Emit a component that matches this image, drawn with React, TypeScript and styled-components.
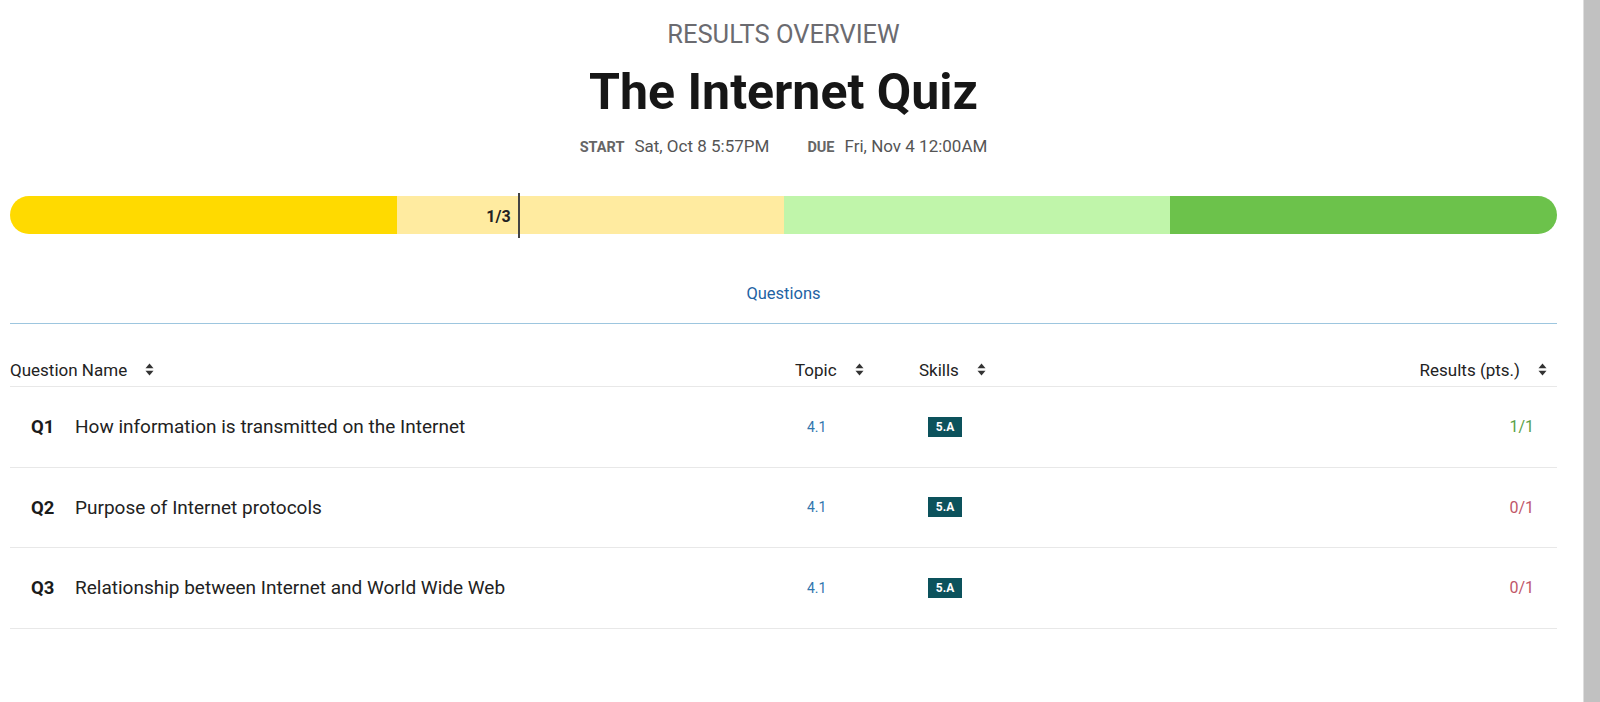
import styled, { createGlobalStyle } from "styled-components";

const GlobalStyle = createGlobalStyle`
    html, body {
        margin: 0;
        padding: 0;
        height: 100%;
        overflow: hidden;
        background: #fff;
    }
    body {
        font-family: Roboto, "Liberation Sans", Arial, sans-serif;
        color: #222;
    }
`

const Screen = styled.div`
    display: flex;
    height: 100vh;
`

const Page = styled.main`
    flex: 1;
    min-width: 0;
    padding: 20px 26px 0 10px;
`

const ScrollTrack = styled.div`
    width: 16px;
    flex-shrink: 0;
    background: #c1c1c1;
    border-left: 1px solid #dedede;
`

const Header = styled.header`
    display: flex;
    flex-direction: column;
    align-items: center;
`

const Eyebrow = styled.div`
    font-size: 25.5px;
    line-height: 28px;
    color: #6b6b70;
`

const Title = styled.h1`
    margin: 14px 0 0;
    font-size: 50px;
    line-height: 60px;
    font-weight: 700;
    color: #161616;
`

const Dates = styled.div`
    margin-top: 14px;
    display: flex;
    align-items: baseline;
    gap: 38px;
    line-height: 20px;
`

const DateItem = styled.div`
    display: flex;
    align-items: baseline;
    gap: 10px;
`

const DateLabel = styled.span`
    font-size: 14.5px;
    font-weight: 700;
    color: #666;
`

const DateValue = styled.span`
    font-size: 17px;
    color: #555;
`

const Progress = styled.div`
    position: relative;
    margin-top: 38px;
    height: 38px;
`

const Track = styled.div`
    display: flex;
    height: 100%;
    border-radius: 19px;
    overflow: hidden;
`

const Segment = styled.div<{ $color: string }>`
    flex: 1;
    background: ${(p) => p.$color};
`

const Marker = styled.div`
    position: absolute;
    top: -3px;
    bottom: -4px;
    width: 2px;
    background: #444;
`

const MarkerLabel = styled.span`
    position: absolute;
    right: 9px;
    top: 50%;
    transform: translateY(-50%);
    font-size: 16px;
    font-weight: 700;
    color: #222;
`

const Tabs = styled.nav`
    margin-top: 42px;
    display: flex;
    justify-content: center;
    border-bottom: 1px solid #9dc6df;
`

const Tab = styled.div`
    padding: 8px 0 19px;
    font-size: 16.5px;
    line-height: 20px;
    color: #1f63a4;
`

const Table = styled.div`
    margin-top: 29px;
`

const Row = styled.div<{ $head?: boolean }>`
    display: grid;
    grid-template-columns: 785px 124px 124px 1fr;
    align-items: center;
    height: ${(p) => (p.$head ? "33px" : "79.5px")};
    border-bottom: 1px solid #e8e8e8;
`

const HeadCell = styled.div<{ $end?: boolean }>`
    display: flex;
    align-items: center;
    justify-content: ${(p) => (p.$end ? "flex-end" : "flex-start")};
    gap: 18px;
    padding-right: ${(p) => (p.$end ? "10px" : "0")};
    font-size: 17px;
    color: #222;
`

const NameCell = styled.div`
    display: flex;
    align-items: baseline;
    padding-left: 21px;
`

const QLabel = styled.span`
    width: 44px;
    flex-shrink: 0;
    font-size: 18.5px;
    font-weight: 700;
    color: #1b1b1b;
`

const QText = styled.span`
    font-size: 19px;
    color: #222;
`

const TopicCell = styled.div`
    padding-left: 12px;
    font-size: 14px;
    color: #3276ad;
`

const SkillCell = styled.div`
    padding-left: 9px;
    display: flex;
`

const Badge = styled.span`
    display: inline-flex;
    align-items: center;
    justify-content: center;
    width: 34px;
    height: 20px;
    background: #0c525c;
    color: #fff;
    font-size: 12px;
    font-weight: 700;
`

const ScoreCell = styled.div<{ $full: boolean }>`
    text-align: right;
    padding-right: 23px;
    font-size: 16px;
    color: ${(p) => (p.$full ? "#5a9f47" : "#c05668")};
`

const SortIcon = () => (
    <svg width="9" height="13" viewBox="0 0 9 13" fill="#333">
        <path d="M4.5 0.5 L8.5 5.2 H0.5 Z" />
        <path d="M4.5 12.5 L8.5 7.8 H0.5 Z" />
    </svg>
)

const questions = [
    { id: "Q1", name: "How information is transmitted on the Internet", topic: "4.1", skill: "5.A", score: 1 },
    { id: "Q2", name: "Purpose of Internet protocols", topic: "4.1", skill: "5.A", score: 0 },
    { id: "Q3", name: "Relationship between Internet and World Wide Web", topic: "4.1", skill: "5.A", score: 0 },
]

const segments = ["#ffda00", "#ffeba0", "#c0f5aa", "#6cc24b"]

const App = () => {
    const progress = 1 / 3

    return (
        <Screen>
            <GlobalStyle />
            <Page>
                <Header>
                    <Eyebrow>RESULTS OVERVIEW</Eyebrow>
                    <Title>The Internet Quiz</Title>
                    <Dates>
                        <DateItem>
                            <DateLabel>START</DateLabel>
                            <DateValue>Sat, Oct 8 5:57PM</DateValue>
                        </DateItem>
                        <DateItem>
                            <DateLabel>DUE</DateLabel>
                            <DateValue>Fri, Nov 4 12:00AM</DateValue>
                        </DateItem>
                    </Dates>
                </Header>

                <Progress>
                    <Track>
                        {segments.map((c) => <Segment key={c} $color={c} />)}
                    </Track>
                    <Marker style={{ left: `calc(${progress * 100}% - 8px)` }}>
                        <MarkerLabel>1/3</MarkerLabel>
                    </Marker>
                </Progress>

                <Tabs>
                    <Tab>Questions</Tab>
                </Tabs>

                <Table>
                    <Row $head>
                        <HeadCell>Question Name <SortIcon /></HeadCell>
                        <HeadCell>Topic <SortIcon /></HeadCell>
                        <HeadCell>Skills <SortIcon /></HeadCell>
                        <HeadCell $end>Results (pts.) <SortIcon /></HeadCell>
                    </Row>
                    {questions.map((q) => (
                        <Row key={q.id}>
                            <NameCell>
                                <QLabel>{q.id}</QLabel>
                                <QText>{q.name}</QText>
                            </NameCell>
                            <TopicCell>{q.topic}</TopicCell>
                            <SkillCell><Badge>{q.skill}</Badge></SkillCell>
                            <ScoreCell $full={q.score === 1}>{q.score}/1</ScoreCell>
                        </Row>
                    ))}
                </Table>
            </Page>
            <ScrollTrack />
        </Screen>
    )
}

export default App
